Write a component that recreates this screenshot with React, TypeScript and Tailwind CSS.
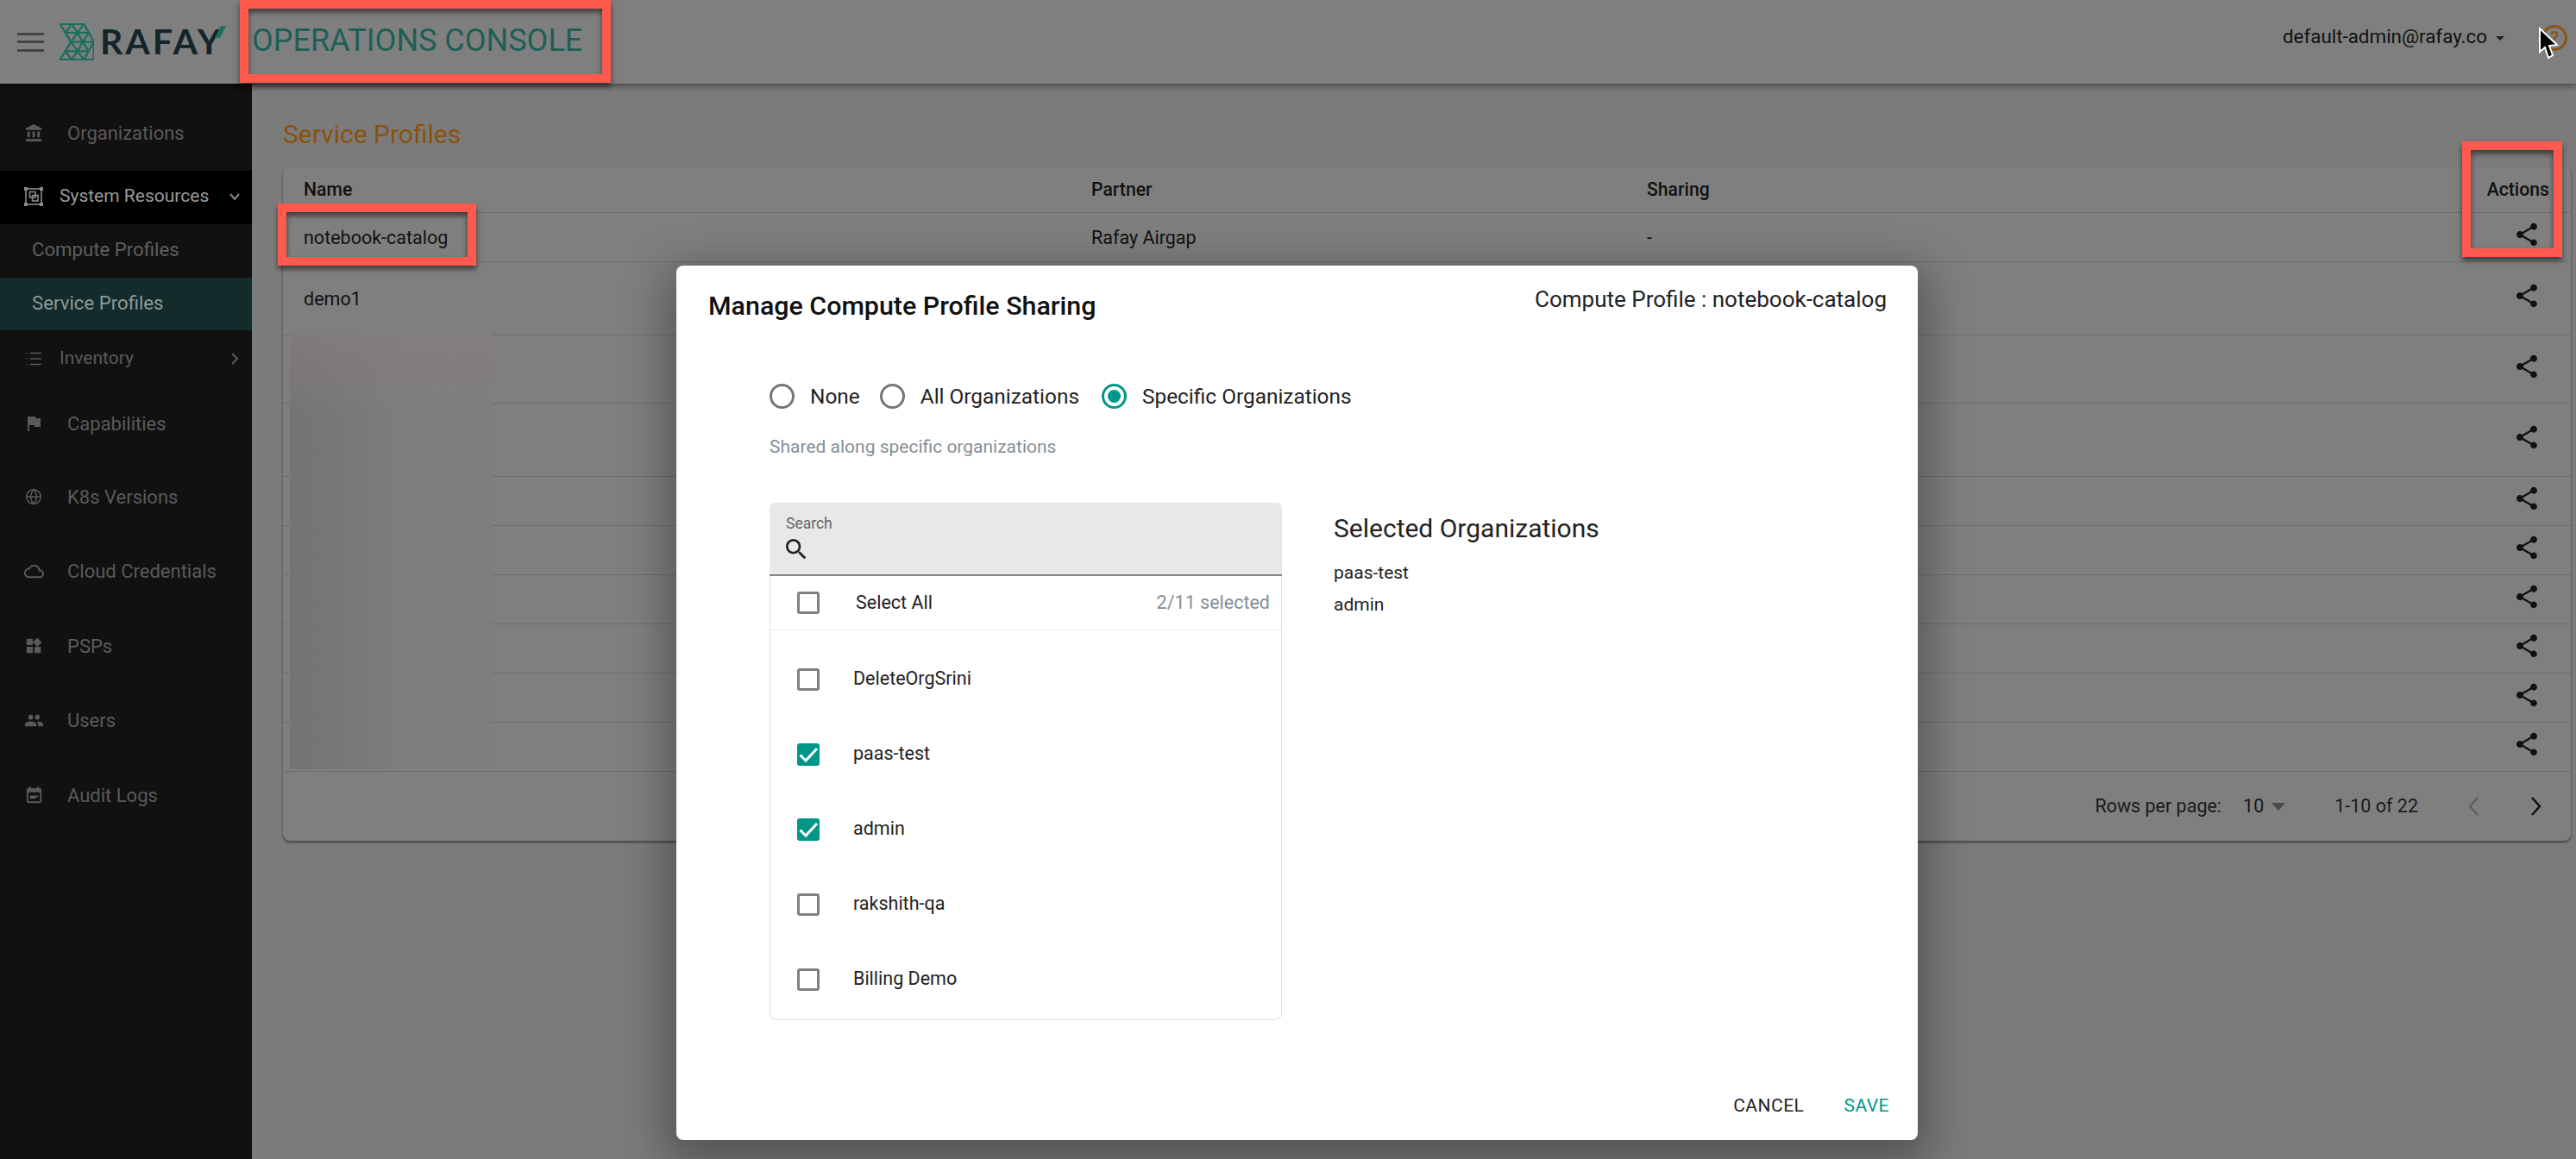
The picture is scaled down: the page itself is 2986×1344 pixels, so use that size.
import React from "react";
import { Globe, List } from "lucide-react";

const SharePath =
  "M18 16.08c-.76 0-1.44.3-1.96.77L8.91 12.7c.05-.23.09-.46.09-.7s-.04-.47-.09-.7l7.05-4.11c.54.5 1.25.81 2.04.81 1.66 0 3-1.34 3-3s-1.34-3-3-3-3 1.34-3 3c0 .24.04.47.09.7L8.04 9.81C7.5 9.31 6.79 9 6 9c-1.66 0-3 1.34-3 3s1.34 3 3 3c.79 0 1.5-.31 2.04-.81l7.12 4.16c-.05.21-.08.43-.08.65 0 1.61 1.31 2.92 2.92 2.92 1.61 0 2.92-1.31 2.92-2.92s-1.31-2.92-2.92-2.92z";

const Mui = ({ d, size = 24, className = "" }: { d: string; size?: number; className?: string }) => (
  <svg width={size} height={size} viewBox="0 0 24 24" fill="currentColor" className={className}>
    <path d={d} />
  </svg>
);

const SystemIcon = () => (
  <svg width="24" height="24" viewBox="0 0 24 24" fill="none" stroke="currentColor" strokeWidth="1.6">
    <rect x="3" y="3" width="18" height="18" />
    <rect x="7.5" y="6.5" width="6.5" height="6.5" />
    <rect x="10.5" y="10.5" width="6.5" height="6.5" />
    <g fill="currentColor" stroke="none">
      <rect x="1" y="1" width="4" height="4" />
      <rect x="19" y="1" width="4" height="4" />
      <rect x="1" y="19" width="4" height="4" />
      <rect x="19" y="19" width="4" height="4" />
    </g>
  </svg>
);

const Chevron = ({ down = false }: { down?: boolean }) => (
  <svg width="16" height="16" viewBox="0 0 16 16" fill="none" stroke="currentColor" strokeWidth="2">
    <path d={down ? "M3 5l5 6 5-6" : "M5 2l6 6-6 6"} />
  </svg>
);

const Logo = () => (
  <svg width="40" height="43" viewBox="0 0 119 127" fill="none" stroke="#1b6f5e" strokeWidth="7" strokeLinejoin="round">
    <path d="M2 2H84L118 62V125H2L40 64Z" />
    <path d="M42 2L20 32H102M42 2L62 32L84 2M20 32L40 64H118M62 32L40 64M62 32L80 64M102 32L80 64" />
    <path d="M40 64L20 96H100M40 64L62 96L80 64M80 64L100 96L118 64M20 96L42 125L62 96L84 125L100 96" />
  </svg>
);

const Share = () => <Mui d={SharePath} size={32} className="mb-[7px] text-[#111]" />;

const NavItem = ({
  icon,
  label,
  rowClass,
  labelClass,
  chevron,
}: {
  icon: React.ReactNode;
  label: string;
  rowClass: string;
  labelClass: string;
  chevron?: React.ReactNode;
}) => (
  <div className={`flex items-center pl-[27px] pr-[12px] ${rowClass}`}>
    <div className="flex w-[24px] justify-center">{icon}</div>
    <span className={labelClass}>{label}</span>
    {chevron && <div className="ml-auto">{chevron}</div>}
  </div>
);

const rows = [
  { h: "h-[57px]", name: "notebook-catalog", partner: "Rafay Airgap", sharing: "-" },
  { h: "h-[85px]", name: "demo1", partner: "", sharing: "" },
  { h: "h-[79px]", name: "", partner: "", sharing: "" },
  { h: "h-[85px]", name: "", partner: "", sharing: "" },
  { h: "h-[57px]", name: "", partner: "", sharing: "" },
  { h: "h-[57px]", name: "", partner: "", sharing: "" },
  { h: "h-[57px]", name: "", partner: "", sharing: "" },
  { h: "h-[57px]", name: "", partner: "", sharing: "" },
  { h: "h-[57px]", name: "", partner: "", sharing: "" },
  { h: "h-[57px]", name: "", partner: "", sharing: "" },
];

const orgs = [
  { name: "DeleteOrgSrini", checked: false },
  { name: "paas-test", checked: true },
  { name: "admin", checked: true },
  { name: "rakshith-qa", checked: false },
  { name: "Billing Demo", checked: false },
];

const CheckBox = ({ checked = false }: { checked?: boolean }) =>
  checked ? (
    <div className="h-[26px] w-[26px] rounded-[3px] bg-[#009688]">
      <svg width="26" height="26" viewBox="0 0 26 26" fill="none" stroke="#fff" strokeWidth="3">
        <path d="M3.5 13.5L10 20L23 6" />
      </svg>
    </div>
  ) : (
    <div className="h-[26px] w-[26px] rounded-[3px] border-[3px] border-[#808080]" />
  );

const Radio = ({ label, checked = false, className = "" }: { label: string; checked?: boolean; className?: string }) => (
  <div className={`flex items-center ${className}`}>
    {checked ? (
      <div className="flex h-[29px] w-[29px] items-center justify-center rounded-full border-[3px] border-[#009688]">
        <div className="h-[15px] w-[15px] rounded-full bg-[#009688]" />
      </div>
    ) : (
      <div className="h-[29px] w-[29px] rounded-full border-[3px] border-[#757575]" />
    )}
    <span className="ml-[18px] text-[24.4px] leading-[29px] text-[#222]">{label}</span>
  </div>
);

const RedBox = ({ className }: { className: string }) => (
  <div
    className={`absolute border-[10px] border-[#ff5a4d] shadow-[0_4px_6px_rgba(0,0,0,0.55),inset_0_4px_6px_rgba(0,0,0,0.55)] ${className}`}
  />
);

export default function App() {
  return (
    <div className="relative h-[1344px] w-[2986px] overflow-hidden bg-[#7b7b7b] [font-family:Roboto,sans-serif]">
      {/* top bar */}
      <header className="relative z-10 flex h-[97px] items-center bg-[#7f7f7f] pr-[10px] shadow-[0_3px_7px_rgba(0,0,0,0.4)]">
        <div className="ml-[20px] flex w-[31px] flex-col gap-[6.5px]">
          <div className="h-[3px] bg-[#444]" />
          <div className="h-[3px] bg-[#444]" />
          <div className="h-[3px] bg-[#444]" />
        </div>
        <div className="ml-[18px]">
          <Logo />
        </div>
        <div className="relative ml-[7px] w-[148px]">
          <span className="text-[41px] leading-none font-bold tracking-[3px] text-[#13252a] [font-family:Lato,sans-serif]">
            RAFAY
          </span>
          <div className="absolute top-[3px] right-[2px] h-[14px] w-[13px] bg-[#1b6f5e] [clip-path:polygon(55%_0,100%_0,45%_100%,0_100%)]" />
        </div>
        <span className="mb-[3px] ml-[28px] text-[36px] leading-none text-[#1d5f56]">OPERATIONS CONSOLE</span>
        <span className="mb-[11px] ml-auto text-[22.4px] text-[#111]">default-admin@rafay.co</span>
        <div className="mb-[9px] ml-[10px] h-0 w-0 border-x-[5px] border-t-[5px] border-x-transparent border-t-[#222]" />
        <div className="mb-[9px] ml-[43px] flex h-[30px] w-[30px] items-center justify-center rounded-full border-[3px] border-[#8a5510] text-[20px] font-medium text-[#8a5510]">
          ?
        </div>
      </header>

      <div className="flex h-[1247px]">
        {/* side navigation */}
        <aside className="w-[292px] shrink-0 bg-[#111] pt-[14px] text-[22px] text-[#5a5a5a]">
          <NavItem
            rowClass="h-[87px]"
            labelClass="ml-[27px]"
            label="Organizations"
            icon={<Mui size={23} d="M4 10v7h3v-7H4zm6 0v7h3v-7h-3zM2 22h19v-3H2v3zm14-12v7h3v-7h-3zm-4.5-9L2 6v2h19V6l-9.5-5z" />}
          />
          <NavItem
            rowClass="h-[62px] pb-[3px] bg-black text-[#8a8a8a]"
            labelClass="ml-[18px] text-[21px] text-[#9a9a9a]"
            label="System Resources"
            icon={<SystemIcon />}
            chevron={<Chevron down />}
          />
          <div className="flex h-[62px] items-center pb-[3px] pl-[37px] text-[22.2px] text-[#5f5f5f]">Compute Profiles</div>
          <div className="flex h-[61px] items-center pb-[1px] bg-[#132b2a] pl-[37px] text-[22.2px] text-[#8c9a98]">Service Profiles</div>
          <NavItem
            rowClass="h-[68px] pb-[3px]"
            labelClass="ml-[18px] text-[21px]"
            label="Inventory"
            icon={<List size={22} strokeWidth={1.6} />}
            chevron={<Chevron />}
          />
          <NavItem rowClass="h-[80px]" labelClass="ml-[27px]" label="Capabilities" icon={<Mui d="M14.4 6L14 4H5v17h2v-7h5.6l.4 2h7V6z" />} />
          <NavItem rowClass="h-[90px]" labelClass="ml-[27px]" label="K8s Versions" icon={<Globe size={20} strokeWidth={1.8} />} />
          <NavItem
            rowClass="h-[82px]"
            labelClass="ml-[27px]"
            label="Cloud Credentials"
            icon={<Mui size={23} d="M19.35 10.04C18.67 6.59 15.64 4 12 4 9.11 4 6.6 5.64 5.35 8.04 2.34 8.36 0 10.91 0 14c0 3.31 2.69 6 6 6h13c2.76 0 5-2.24 5-5 0-2.64-2.05-4.78-4.65-4.96zM19 18H6c-2.21 0-4-1.79-4-4s1.79-4 4-4h.71C7.37 7.69 9.48 6 12 6c3.04 0 5.5 2.46 5.5 5.5v.5H19c1.66 0 3 1.34 3 3s-1.34 3-3 3z" />}
          />
          <NavItem
            rowClass="h-[92px]"
            labelClass="ml-[27px]"
            label="PSPs"
            icon={<Mui size={22} d="M13 13v8h8v-8h-8zM3 21h8v-8H3v8zM3 3v8h8V3H3zm13.66-1.31L11 7.34 16.66 13l5.66-5.66-5.66-5.65z" />}
          />
          <NavItem
            rowClass="h-[80px]"
            labelClass="ml-[27px]"
            label="Users"
            icon={<Mui size={23} d="M16 11c1.66 0 2.99-1.34 2.99-3S17.66 5 16 5c-1.66 0-3 1.34-3 3s1.34 3 3 3zm-8 0c1.66 0 2.99-1.34 2.99-3S9.66 5 8 5C6.34 5 5 6.34 5 8s1.34 3 3 3zm0 2c-2.33 0-7 1.17-7 3.5V19h14v-2.5c0-2.33-4.67-3.5-7-3.5zm8 0c-.29 0-.62.02-.97.05 1.16.84 1.97 1.97 1.97 3.45V19h6v-2.5c0-2.33-4.67-3.5-7-3.5z" />}
          />
          <NavItem
            rowClass="h-[94px]"
            labelClass="ml-[27px]"
            label="Audit Logs"
            icon={<Mui size={23} d="M17 12H7v2h10v-2zm2-9h-1V1h-2v2H8V1H6v2H5c-1.11 0-1.99.9-1.99 2L3 19c0 1.1.89 2 2 2h14c1.1 0 2-.9 2-2V5c0-1.1-.9-2-2-2zm0 16H5V8h14v11zm-5-5H7v2h7v-2z" />}
          />
        </aside>

        {/* page body */}
        <main className="flex-1 pt-[41px] pr-[6px] pl-[36px]">
          <h1 className="text-[30px] leading-[36px] text-[#8a520c]">Service Profiles</h1>
          <div className="relative mt-[19px] rounded-[8px] bg-[#7f7f7f] shadow-[0_2px_3px_rgba(0,0,0,0.45)]">
            <div className="flex h-[54px] items-center border-b border-[#6c6c6c] pr-[25px] pl-[24px] text-[21.2px] font-medium text-[#111]">
              <div className="w-[913px]">Name</div>
              <div className="w-[644px]">Partner</div>
              <div>Sharing</div>
              <div className="ml-auto">Actions</div>
            </div>
            {rows.map((row, i) => (
              <div key={i} className={`flex items-center border-b border-[#6c6c6c] pr-[35px] pl-[24px] text-[21.5px] text-[#111] ${row.h}`}>
                <div className="w-[913px] pt-[2px]">{row.name}</div>
                <div className="w-[644px] pt-[2px]">{row.partner}</div>
                <div className="pt-[2px]">{row.sharing}</div>
                <div className="ml-auto flex">
                  <Share />
                </div>
              </div>
            ))}
            <div className="flex h-[80px] items-center justify-end pr-[33px] text-[21.5px] text-[#1a1a1a]">
              <span>Rows per page:</span>
              <span className="ml-[25px]">10</span>
              <div className="ml-[9px] h-0 w-0 border-x-[8px] border-t-[9px] border-x-transparent border-t-[#4a4a4a]" />
              <span className="ml-[57px]">1-10 of 22</span>
              <svg width="14" height="24" viewBox="0 0 14 24" fill="none" stroke="#5f5f5f" strokeWidth="2.5" className="ml-[57px]">
                <path d="M12 2L3 12l9 10" />
              </svg>
              <svg width="14" height="24" viewBox="0 0 14 24" fill="none" stroke="#111" strokeWidth="2.5" className="ml-[59px]">
                <path d="M2 2l9 10-9 10" />
              </svg>
            </div>
            {/* blurred out names */}
            <div className="absolute top-[195px] left-[8px] h-[504px] w-[234px] bg-[linear-gradient(180deg,rgba(135,125,125,0.7),transparent_20%),linear-gradient(90deg,#737373,#7e7e7e_60%)]" />
          </div>
        </main>
      </div>

      {/* dialog */}
      <div className="absolute top-[308px] left-[784px] z-20 flex h-[1014px] w-[1439px] flex-col rounded-[8px] bg-white shadow-[0_16px_50px_14px_rgba(0,0,0,0.3)]">
        <div className="flex items-start justify-between pt-[24px] pr-[36px] pl-[37px]">
          <h2 className="mt-[5px] text-[30.4px] leading-[36px] font-medium text-[#111]">Manage Compute Profile Sharing</h2>
          <span className="text-[26px] leading-[30px] text-[#222]">Compute Profile : notebook-catalog</span>
        </div>
        <div className="px-[108px]">
          <div className="mt-[72px] flex">
            <Radio label="None" />
            <Radio label="All Organizations" className="ml-[23px]" />
            <Radio label="Specific Organizations" checked className="ml-[26px]" />
          </div>
          <p className="mt-[31px] text-[21px] leading-[26px] text-[#858f97]">Shared along specific organizations</p>
          <div className="mt-[52px] flex">
            <div className="w-[594px]">
              <div className="h-[85px] rounded-t-[6px] border-b-2 border-[#858585] bg-[#e8e8e8] pt-[14px] pl-[19px]">
                <div className="text-[17.5px] leading-[20px] text-[#666]">Search</div>
                <Mui
                  size={32}
                  className="mt-[4px] -ml-[4px] text-[#222]"
                  d="M15.5 14h-.79l-.28-.27C15.41 12.59 16 11.11 16 9.5 16 5.91 13.09 3 9.5 3S3 5.91 3 9.5 5.91 16 9.5 16c1.61 0 3.09-.59 4.23-1.57l.27.28v.79l5 4.99L20.49 19l-4.99-5zm-6 0C7.01 14 5 11.99 5 9.5S7.01 5 9.5 5 14 7.01 14 9.5 11.99 14 9.5 14z"
                />
              </div>
              <div className="rounded-b-[8px] border-x border-b border-[#e2e2e2] pb-[3px]">
                <div className="flex h-[63px] items-center border-b border-[#e8e8e8] pr-[13px] pl-[31px] text-[21.5px]">
                  <CheckBox />
                  <span className="ml-[42px] text-[#222]">Select All</span>
                  <span className="ml-auto text-[#858f97]">2/11 selected</span>
                </div>
                <div className="pt-[13px]">
                  {orgs.map((org) => (
                    <div key={org.name} className="flex h-[87px] items-center pl-[31px] text-[21.5px] text-[#222]">
                      <CheckBox checked={org.checked} />
                      <span className="ml-[39px]">{org.name}</span>
                    </div>
                  ))}
                </div>
              </div>
            </div>
            <div className="ml-[60px] pt-[12px] text-[#222]">
              <h3 className="text-[30px] leading-[36px]">Selected Organizations</h3>
              <div className="mt-[20px] text-[21px] leading-[26px]">paas-test</div>
              <div className="mt-[11px] text-[21px] leading-[26px]">admin</div>
            </div>
          </div>
        </div>
        <div className="mt-auto flex justify-end gap-[46px] pr-[33px] pb-[25px] text-[21px] leading-[30px] tracking-[0.5px]">
          <span className="text-[#222]">CANCEL</span>
          <span className="text-[#009688]">SAVE</span>
        </div>
      </div>

      {/* annotations */}
      <RedBox className="top-0 left-[278px] z-30 h-[96px] w-[430px]" />
      <RedBox className="top-[236px] left-[322px] z-30 h-[72px] w-[230px]" />
      <RedBox className="top-[164px] left-[2854px] z-30 h-[134px] w-[116px]" />

      {/* mouse cursor */}
      <svg width="56" height="56" viewBox="0 0 56 56" className="absolute top-[20px] left-[2930px] z-40">
        <path d="M14 13V40L20 35L24 47L29 44L25 33L34 32Z" fill="#000" stroke="#fff" strokeWidth="2" />
      </svg>
    </div>
  );
}
